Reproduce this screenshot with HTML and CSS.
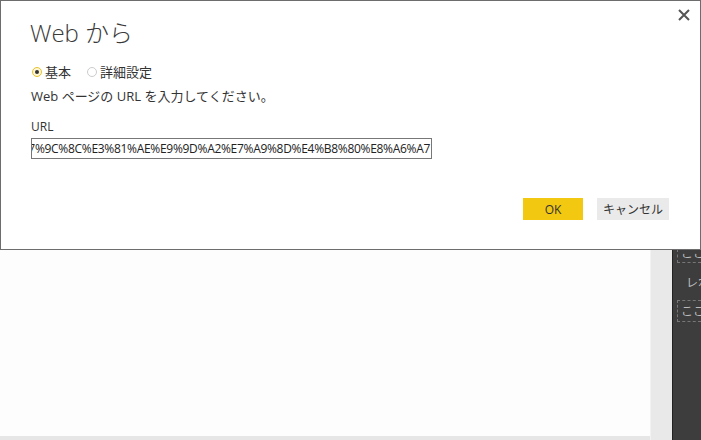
FILE: index.html
```html
<!DOCTYPE html>
<html lang="ja">

<head>
    <meta charset="UTF-8">
    <meta name="viewport" content="width=device-width, initial-scale=1.0">
    <title>Web から</title>
    <link rel="stylesheet" href="styles.css">
</head>

<body>
    <div class="app">
        <div class="canvas">
            <div class="canvas-body"></div>
            <div class="canvas-foot"></div>
        </div>
        <div class="scroll-strip"></div>
        <div class="side-panel">
            <div class="drop-box">ここ</div>
            <div class="side-label">レポ</div>
            <div class="drop-box tall">ここ</div>
        </div>
    </div>

    <div class="dialog">
        <button class="close" aria-label="閉じる">
            <svg width="12" height="12" viewBox="0 0 12 12">
                <path d="M1 1 L11 11 M11 1 L1 11" stroke="#555" stroke-width="2" fill="none" />
            </svg>
        </button>
        <h1 class="title">Web から</h1>
        <div class="modes">
            <label class="mode"><span class="radio checked"></span>基本</label>
            <label class="mode"><span class="radio"></span>詳細設定</label>
        </div>
        <p class="hint">Web ページの URL を入力してください。</p>
        <div class="field-label">URL</div>
        <div class="url-box"><span>https://ja.wikipedia.org/wiki/%E9%83%BD%E9%81%93%E5%BA%9C%E7%9C%8C%E3%81%AE%E9%9D%A2%E7%A9%8D%E4%B8%80%E8%A6%A7</span></div>
        <div class="actions">
            <button class="btn ok">OK</button>
            <button class="btn cancel">キャンセル</button>
        </div>
    </div>
</body>

</html>
```

FILE: styles.css
```css
html,
body {
    margin: 0;
    height: 100%;
    overflow: hidden;
}

body {
    font-family: "Open Sans", "Noto Sans CJK JP", sans-serif;
    color: #333;
    background: #fff;
}

.app {
    display: flex;
    height: 440px;
}

.canvas {
    flex: 1;
    display: flex;
    flex-direction: column;
}

.canvas-body {
    flex: 1;
    background: #fdfdfd;
}

.canvas-foot {
    height: 4px;
    background: #e6e6e6;
}

.scroll-strip {
    width: 22px;
    box-sizing: border-box;
    background: #e9e9e9;
    border-left: 1px solid #f2f2f2;
}

.side-panel {
    width: 29px;
    box-sizing: border-box;
    background: #3d3d3d;
    border-left: 1px solid #222;
    padding: 249px 0 0 4px;
    display: flex;
    flex-direction: column;
    font-family: "Noto Sans CJK JP", sans-serif;
    font-size: 12px;
    color: #bbb;
    overflow: hidden;
    white-space: nowrap;
}

.drop-box {
    height: 12px;
    line-height: 6px;
    border: 1px dashed #777;
    border-right: none;
    padding-left: 3px;
    overflow: hidden;
}

.drop-box.tall {
    height: 20px;
    line-height: 20px;
}

.side-label {
    padding: 11px 0 10px 9px;
    line-height: 16px;
}

/* dialog over the report */
.dialog {
    position: absolute;
    left: 0;
    top: 0;
    width: 669px;
    height: 248px;
    background: #fff;
    border: 1px solid #6d6d6d;
    padding: 0 0 0 30px;
}

.close {
    position: absolute;
    right: 10px;
    top: 8px;
    border: none;
    background: none;
    padding: 0;
    width: 12px;
    height: 12px;
    cursor: pointer;
}

.title {
    margin: 16px 0 0 -1px;
    font-family: "Open Sans", "Noto Sans CJK JP", sans-serif;
    font-weight: 300;
    font-size: 24px;
    line-height: 32px;
    color: #3a3a3a;
}

.modes {
    display: flex;
    gap: 15px;
    margin-top: 14px;
    font-size: 13px;
    line-height: 17px;
}

.mode {
    display: flex;
    align-items: center;
    gap: 3px;
    font-family: "Noto Sans CJK JP", sans-serif;
}

.radio {
    width: 8px;
    height: 8px;
    border: 1px solid #ccc;
    border-radius: 50%;
    display: flex;
    align-items: center;
    justify-content: center;
    margin-left: 1px;
}

.radio.checked {
    border-color: #e8c32a;
    background: #fdf6d8;
}

.radio.checked::after {
    content: "";
    width: 4px;
    height: 4px;
    border-radius: 50%;
    background: #333;
}

.hint {
    margin: 7px 0 0 0;
    font-size: 13px;
    line-height: 18px;
}

.field-label {
    margin-top: 14px;
    font-size: 12px;
    line-height: 16px;
}

.url-box {
    margin-top: 3px;
    width: 399px;
    height: 19px;
    border: 1px solid #777;
    display: flex;
    justify-content: flex-end;
    overflow: hidden;
    white-space: nowrap;
    font-size: 12px;
    letter-spacing: -0.3px;
    line-height: 19px;
    color: #222;
}

.url-box span {
    padding-right: 1px;
}

.actions {
    display: flex;
    justify-content: flex-end;
    gap: 14px;
    margin: 39px 31px 0 0;
}

.btn {
    border: none;
    height: 22px;
    font-size: 12px;
    font-family: "Open Sans", "Noto Sans CJK JP", sans-serif;
    color: #333;
    cursor: pointer;
}

.btn.ok {
    width: 60px;
    background: #f2c811;
}

.btn.cancel {
    width: 72px;
    background: #eaeaea;
}
```
